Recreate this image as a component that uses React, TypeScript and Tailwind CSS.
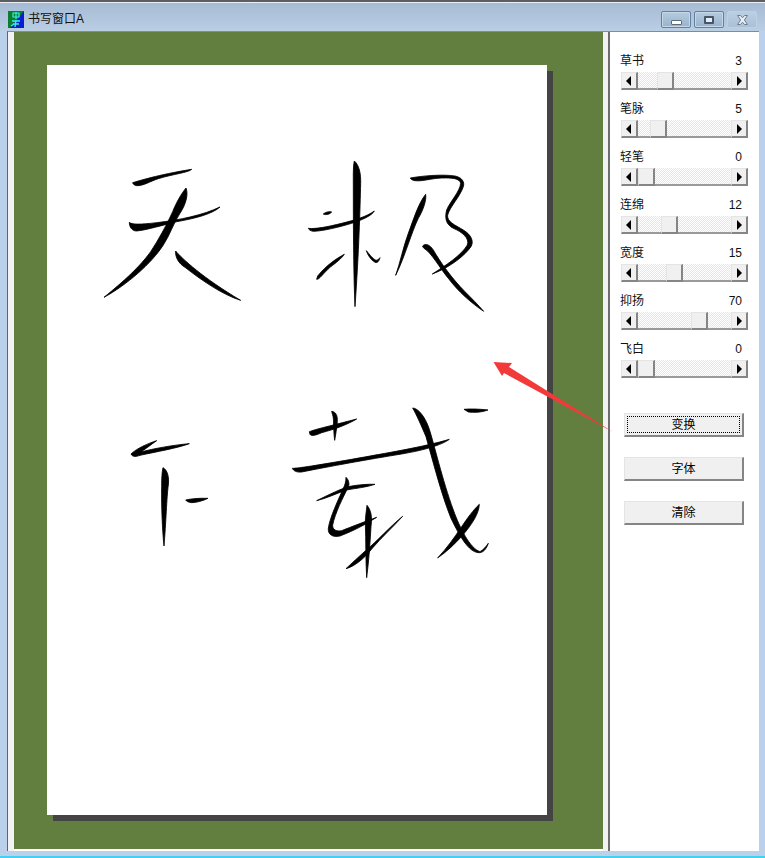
import React from "react";

const font = { fontFamily: '"Liberation Sans","Noto Sans CJK SC",sans-serif' };

const rows = [
  { label: "草书", value: "3", thumb: "ml-[19px]" },
  { label: "笔脉", value: "5", thumb: "ml-[12px]" },
  { label: "轻笔", value: "0", thumb: "ml-0" },
  { label: "连绵", value: "12", thumb: "ml-[23px]" },
  { label: "宽度", value: "15", thumb: "ml-[28px]" },
  { label: "抑扬", value: "70", thumb: "ml-[53px]" },
  { label: "飞白", value: "0", thumb: "ml-0" },
];

const raised =
  "bg-[#f0f0f0] border-t border-l border-t-[#e4e4e4] border-l-[#e4e4e4] border-r-2 border-b-2 border-r-[#858585] border-b-[#858585]";

function Arrow({ dir }: { dir: "l" | "r" }) {
  return (
    <div className={`w-[17px] h-[18px] shrink-0 flex items-center justify-center ${raised}`}>
      <svg width="6" height="10" viewBox="0 0 6 10">
        <path d={dir === "l" ? "M5 0V10L0 5Z" : "M1 0V10L6 5Z"} fill="#000" />
      </svg>
    </div>
  );
}

function Scroll({ thumb }: { thumb: string }) {
  return (
    <div className="flex w-[127px] h-[18px] ml-px">
      <Arrow dir="l" />
      <div className="flex-1 bg-[repeating-conic-gradient(#e6e6e6_0_25%,#ffffff_0_50%)] bg-[length:2px_2px] border-b-2 border-b-[#9a9a9a]">
        <div className={`w-[17px] h-[18px] ${thumb} ${raised}`} />
      </div>
      <Arrow dir="r" />
    </div>
  );
}

function Btn({ label, focus }: { label: string; focus?: boolean }) {
  return (
    <div className={`w-[120px] h-[24px] p-[2px] ml-[4px] ${raised}`}>
      <div
        className={`h-full flex items-center justify-center text-[12px] text-black border border-dotted ${
          focus ? "border-black" : "border-transparent"
        }`}
      >
        {label}
      </div>
    </div>
  );
}

function WinBtn({ kind }: { kind: "min" | "max" | "close" }) {
  if (kind === "close") {
    return (
      <div className="w-[30px] h-[17px] rounded-[2px] border border-[#bfd0e2] bg-gradient-to-b from-[#bccfe2] to-[#a9c0d7] flex items-center justify-center">
        <svg width="11" height="10" viewBox="0 0 11 10">
          <path d="M0.5 0.5H3.5L5.5 2.8L7.5 0.5H10.5L7.4 5L10.5 9.5H7.5L5.5 7.2L3.5 9.5H0.5L3.6 5Z" fill="#e8eef4" stroke="#6b7d90" strokeWidth="1" />
        </svg>
      </div>
    );
  }
  return (
    <div className="w-[30px] h-[17px] rounded-[2px] border border-[#64809f] bg-gradient-to-b from-[#b5cade] to-[#99b3cd] flex items-center justify-center shadow-[inset_0_0_0_1px_#c6d7e7]">
      {kind === "min" ? (
        <div className="w-[11px] h-[5px] mt-[6px] bg-white border border-[#5a6b7e] rounded-[1px]" />
      ) : (
        <div className="w-[10px] h-[8px] bg-[#e6edf4] border-2 border-[#46566a] rounded-[1px]" />
      )}
    </div>
  );
}

function AppIcon() {
  return (
    <svg width="16" height="17" viewBox="0 0 16 17" className="shrink-0">
      <rect width="16" height="17" fill="#0c7d2e" />
      <path d="M16 0V17H2Z" fill="#0a1ed0" />
      <path d="M5 2H11V6H5ZM8 1V8" fill="none" stroke="#35f0e0" strokeWidth="1.2" />
      <path d="M4 10H12M5 13H11M8 9L7 16M3 15L6 13" fill="none" stroke="#35f0e0" strokeWidth="1.4" />
    </svg>
  );
}

function Brush() {
  return (
    <svg
      viewBox="47 65 500 750"
      className="block w-[500px] h-[750px]"
      role="img"
      aria-label="天极下载"
    >
      <g fill="#000" stroke="#000" strokeWidth="2.5" strokeLinejoin="round">
        <g transform="translate(90 150) scale(0.3333)">
          <path d="M128 98C150 92 200 75 305 58C295 68 250 72 205 86C180 94 160 108 140 107C133 106 129 102 128 98Z" />
          <path d="M118 217C125 224 150 224 200 218C270 210 340 195 390 171C370 190 320 205 260 215C220 225 170 240 140 243C125 243 118 230 118 217Z" />
          <path d="M288 114C295 130 290 160 270 190C250 220 240 255 220 285C185 340 110 405 42 442C100 395 150 350 182 305C205 270 230 225 248 185C260 155 275 130 288 114Z" />
          <path d="M257 303C275 325 340 385 452 451C400 435 340 395 285 352C265 340 255 320 257 303Z" />
        </g>
        <g transform="translate(295 150) scale(0.3333)">
          <path d="M178 33C192 45 198 70 197 100C195 180 192 300 180 470C176 380 175 250 175 120C175 80 174 50 178 33Z" />
          <path d="M85 192C92 185 105 184 110 186C105 193 92 196 85 192Z" />
          <path d="M40 235C60 238 100 230 140 220C180 210 215 200 238 183C230 198 200 210 170 220C130 232 85 243 55 244C47 243 42 240 40 235Z" />
          <path d="M148 313C125 325 95 345 68 378L65 388C72 390 85 370 105 352C125 337 140 325 148 313Z" />
          <path d="M214 302C225 315 235 328 243 331C248 331 252 327 255 323C252 333 248 340 240 337C228 330 218 315 214 302Z" />
          <path d="M392 133C395 150 385 180 370 205C350 245 330 320 302 376C315 340 325 290 340 250C355 210 370 160 392 133Z" />
          <path d="M346 84C380 78 440 72 480 78C500 82 510 95 505 110C495 140 465 170 458 195C455 215 480 225 505 240C530 255 537 275 528 290C510 315 470 350 412 372C450 348 500 315 517 285C525 265 500 245 475 235C450 222 450 200 455 180C465 155 495 125 497 100C495 85 470 83 440 84C410 85 380 95 360 92C352 91 348 88 346 84Z" />
          <path d="M383 288C392 278 405 285 415 300C435 335 470 385 510 425C530 445 550 465 566 484C530 460 490 425 460 385C435 355 410 310 390 297C386 295 384 292 383 288Z" />
        </g>
        <g transform="translate(120 430) scale(0.3333)">
          <path d="M33 72C50 55 85 40 110 32C95 42 80 55 62 66C100 56 160 45 208 41C170 55 110 65 60 76C50 80 38 82 33 72Z" />
          <path d="M129 113C142 120 148 140 145 165C140 200 138 280 132 348C127 300 124 230 125 170C125 145 126 125 129 113Z" />
          <path d="M197 210C215 206 240 204 264 205C250 212 230 218 215 218C205 217 200 214 197 210Z" />
        </g>
        <g transform="translate(285 400) scale(0.3333)">
          <path d="M73 95C100 85 160 72 215 57C190 72 150 88 110 98C95 105 78 110 75 103Z" />
          <path d="M140 34C152 36 158 45 157 65C155 85 152 105 149 121C146 100 146 70 145 55C144 45 141 40 140 34Z" />
          <path d="M22 205C40 205 100 195 200 178C300 160 420 140 493 118C470 135 420 150 350 162C250 178 130 200 50 216C35 218 25 212 22 205Z" />
          <path d="M383 24C400 25 420 50 432 85C447 130 472 240 505 330C525 385 555 445 585 455C595 450 603 440 610 430C605 445 595 460 580 458C550 455 525 410 498 355C468 280 443 180 423 110C408 75 395 45 383 24Z" />
          <path d="M583 313C582 340 562 372 532 407C510 432 485 455 458 474C485 445 508 413 528 383C548 353 565 330 583 313Z" />
          <path d="M537 28C555 26 585 27 609 30C590 38 565 38 550 36Z" />
          <path d="M95 302C130 285 175 262 200 258C225 254 250 252 270 253C245 262 210 265 185 270C155 280 125 295 95 302Z" />
          <path d="M183 232C192 240 195 255 188 265C175 290 150 340 143 375C142 390 155 395 170 392C200 380 240 365 275 352C240 375 200 395 165 408C145 413 128 405 130 385C135 350 160 300 175 265C180 255 183 245 183 232Z" />
          <path d="M246 316C258 330 262 350 258 380C255 430 252 480 245 533C242 480 243 420 241 370C241 350 244 335 246 316Z" />
          <path d="M353 349C320 375 272 428 244 450C222 470 200 490 183 506C207 500 237 477 260 447C290 412 325 380 353 349Z" />
        </g>
      </g>
    </svg>
  );
}

export default function App() {
  return (
    <div
      style={font}
      className="relative w-[765px] h-[858px] overflow-hidden flex flex-col bg-[#b9d1ea] text-black"
    >
      {/* title bar */}
      <div className="h-[31px] shrink-0 flex items-start pl-2 pr-2 pt-[11px] border-t-2 border-t-[#5b5f63] bg-gradient-to-b from-[#a5bbd3] to-[#bacee4] shadow-[inset_0_1px_0_#e8eef4]">
        <div className="flex items-center gap-1 -mt-[2px]">
          <AppIcon />
          <span className="text-[12px] leading-[17px] text-[#111]">书写窗口A</span>
        </div>
        <div className="ml-auto flex gap-[3px] -mt-[2px]">
          <WinBtn kind="min" />
          <WinBtn kind="max" />
          <WinBtn kind="close" />
        </div>
      </div>

      {/* client area */}
      <div className="h-[820px] shrink-0 ml-[7px] mr-[6px] flex bg-white border-t border-t-[#7f8c99] border-l border-l-[#5e6469]">
        <div className="w-[6px] shrink-0 bg-[#f4f1f6]" />
        <div className="w-[589px] h-[817px] shrink-0 bg-[#627f3f] pl-[33px] pt-[33px]">
          <div className="w-[500px] h-[750px] bg-white shadow-[6px_6px_0_#444444]">
            <Brush />
          </div>
        </div>
        <div className="w-[5px] shrink-0 bg-[#f2f2f2]" />
        <div className="w-[2px] shrink-0 bg-[#6e6e6e]" />
        <div className="flex-1 pl-[10px] pt-[20px]">
          <div className="flex flex-col gap-[6px]">
            {rows.map((r) => (
              <div key={r.label} className="h-[42px]">
                <div className="flex justify-between w-[122px] h-[18px] items-center text-[12px] text-[#111]">
                  <span>{r.label}</span>
                  <span>{r.value}</span>
                </div>
                <div className="mt-[2px]">
                  <Scroll thumb={r.thumb} />
                </div>
              </div>
            ))}
          </div>
          <div className="mt-[31px] flex flex-col gap-[20px]">
            <Btn label="变换" focus />
            <Btn label="字体" />
            <Btn label="清除" />
          </div>
        </div>
      </div>

      <div className="mt-auto h-[2px] bg-[#46d0f0]" />

      {/* annotation arrow lying over the window */}
      <svg
        className="absolute left-0 top-0 pointer-events-none"
        width="765"
        height="858"
        viewBox="0 0 765 858"
      >
        <path d="M613 432L509 367L512 363L493.5 362L502 376L504 373Z" fill="#f23a3a" />
      </svg>
    </div>
  );
}
